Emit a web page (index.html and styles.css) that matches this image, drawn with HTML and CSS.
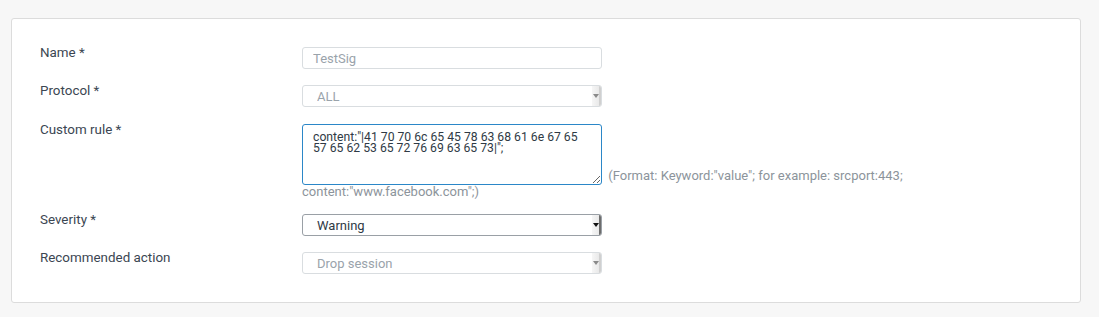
FILE: index.html
```html
<!DOCTYPE html>
<html lang="en">
<head>
<meta charset="utf-8">
<title>Custom signature</title>
<link rel="stylesheet" href="styles.css">
</head>
<body>
<div class="card">
  <div class="form">
    <div class="row">
      <label class="label">Name *</label>
      <div class="field">
        <input class="text-input" type="text" value="TestSig" disabled>
      </div>
    </div>
    <div class="row">
      <label class="label">Protocol *</label>
      <div class="field">
        <div class="select-wrap">
          <select class="select" disabled><option>ALL</option></select>
          <span class="arrow"><span class="tri"></span></span>
        </div>
      </div>
    </div>
    <div class="row row-rule">
      <label class="label">Custom rule *</label>
      <div class="field field-flow">
        <textarea class="textarea">content:"|41 70 70 6c 65 45 78 63 68 61 6e 67 65 57 65 62 53 65 72 76 69 63 65 73|";</textarea> <span class="help">(Format: Keyword:"value"; for example: srcport:443; content:"www.facebook.com";)</span>
      </div>
    </div>
    <div class="row">
      <label class="label">Severity *</label>
      <div class="field">
        <div class="select-wrap active">
          <select class="select"><option>Warning</option></select>
          <span class="arrow"><span class="tri"></span></span>
        </div>
      </div>
    </div>
    <div class="row">
      <label class="label">Recommended action</label>
      <div class="field">
        <div class="select-wrap">
          <select class="select" disabled><option>Drop session</option></select>
          <span class="arrow"><span class="tri"></span></span>
        </div>
      </div>
    </div>
  </div>
</div>
</body>
</html>
```

FILE: styles.css
```css
html, body {
  margin: 0;
  padding: 0;
}
body {
  background: #f7f7f7;
  padding: 18px 18px 14px 11px;
  font-family: Roboto, "Liberation Sans", sans-serif;
  color: #3b4652;
}
.card {
  background: #fff;
  border: 1px solid #dcdcdc;
  border-radius: 3px;
  padding: 28px 28px 28px 28px;
}
.form {
  display: flex;
  flex-direction: column;
  gap: 16px;
}
.row {
  display: grid;
  grid-template-columns: 262px 1fr;
  align-items: start;
}
.row-rule {
  margin-top: 1px;
  margin-bottom: -2px;
}
.label {
  font-size: 13.4px;
  line-height: 16px;
  margin-top: -2px;
  color: #3b4652;
}
.field {
  font-size: 13px;
  line-height: 16px;
}
.text-input {
  box-sizing: border-box;
  display: block;
  width: 300px;
  height: 22px;
  margin: 0;
  padding: 0 10px;
  border: 1px solid #d9dde0;
  border-radius: 3px;
  background: #fff;
  font-family: Roboto, "Liberation Sans", sans-serif;
  font-size: 13px;
  color: #9aa3ab;
}
.select-wrap {
  position: relative;
  width: 300px;
  height: 22px;
}
.select {
  box-sizing: border-box;
  display: block;
  width: 300px;
  height: 22px;
  margin: 0;
  padding: 0 0 0 14px;
  border: 1px solid #d9dde0;
  border-radius: 3px;
  background: #fff;
  -webkit-appearance: none;
  appearance: none;
  font-family: Roboto, "Liberation Sans", sans-serif;
  font-size: 13px;
  color: #9aa3ab;
  opacity: 1;
}
.active .select {
  border-color: #9aa0a6;
  color: #2f3a45;
}
.arrow {
  position: absolute;
  top: 1px;
  bottom: 1px;
  right: 1px;
  width: 7px;
  background: linear-gradient(to right, #f6f6f6, #e9e9e9);
  border-right: 2px solid #d0d0d0;
  border-radius: 0 2px 2px 0;
  display: flex;
  align-items: center;
  justify-content: center;
}
.active .arrow {
  border-right-color: #6d6d6d;
}
.tri {
  width: 0;
  height: 0;
  border-left: 3px solid transparent;
  border-right: 3px solid transparent;
  border-top: 4px solid #8a8a8a;
}
.active .tri {
  border-top-color: #111;
}
.textarea {
  box-sizing: border-box;
  display: inline-block;
  vertical-align: bottom;
  width: 300px;
  height: 61px;
  margin: 0 3px -1px 0;
  padding: 7px 10px 5px;
  border: 1px solid #2b87c8;
  border-radius: 3px;
  background: #fff;
  font-family: Roboto, "Liberation Sans", sans-serif;
  font-size: 12.2px;
  line-height: 10.5px;
  color: #2f3a45;
  resize: both;
  outline: none;
  overflow: hidden;
}
.help {
  color: #8c949b;
}
```
